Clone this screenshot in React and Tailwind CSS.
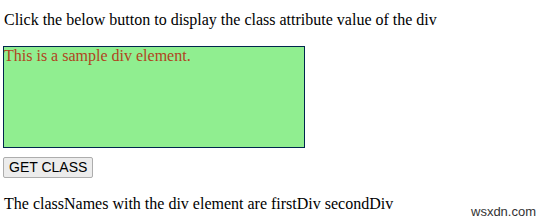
import React, { useState } from 'react';

export default function App() {
    const [classes, setClasses] = useState('firstDiv secondDiv');

    return (
        <div className="w-[544px] h-[222px] bg-white relative overflow-hidden text-black text-[16px] leading-[18px]" style={{ fontFamily: '"Liberation Serif", "Times New Roman", serif' }}>
            <div className="pl-[4px] pt-[11px]">
                <p>Click the below button to display the class attribute value of the div</p>
            </div>
            {/* Sample div */}
            <div className="ml-[3px] mt-[17px] w-[302px] h-[102px] bg-[#90ee90] border border-[#00264d] text-[#b0441e] leading-[18px]">
                This is a sample div element.
            </div>
            <div className="ml-[3px] mt-[9px]">
                <button
                    onClick={() => setClasses('firstDiv secondDiv')}
                    className="h-[21px] px-[5px] text-[14px] leading-[19px] text-black bg-[#ececec] border border-[#adadad] rounded-[2px]"
                    style={{ fontFamily: '"Liberation Sans", Arial, sans-serif' }}
                >
                    GET CLASS
                </button>
            </div>
            <p className="pl-[4px] mt-[17px]">The classNames with the div element are {classes}</p>
            {/* watermark */}
            <span className="absolute left-[471px] top-[204px] text-[13px] leading-[15px] text-[#333]" style={{ fontFamily: '"Liberation Sans", Arial, sans-serif' }}>wsxdn.com</span>
        </div>
    );
}
